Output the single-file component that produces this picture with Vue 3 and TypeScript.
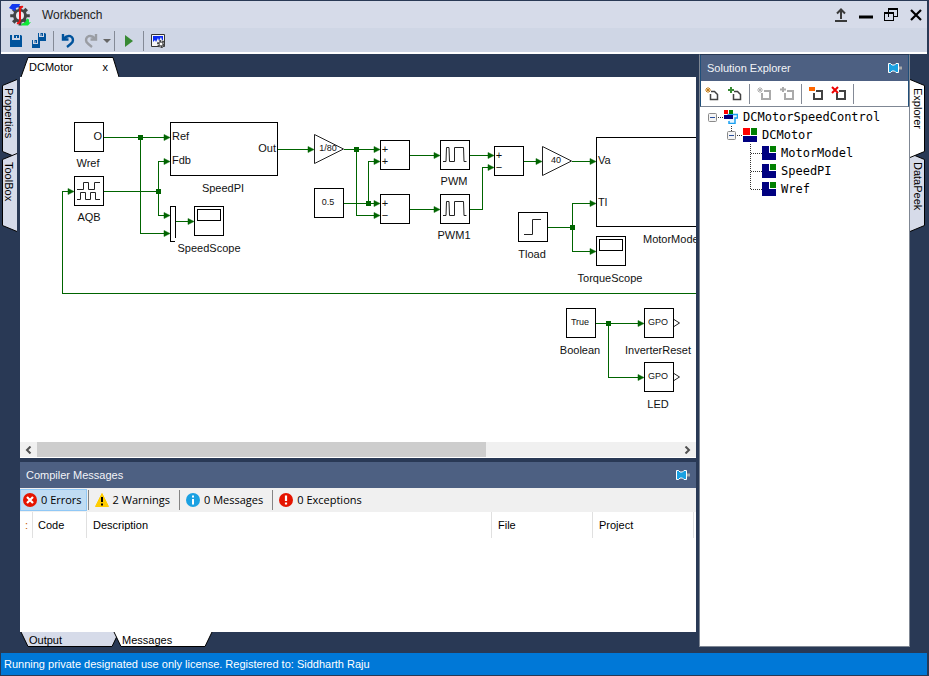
<script setup lang="ts">
import { ref } from 'vue'

type Glyph = 'aqb' | 'scope' | 'pwm' | 'step'
interface Block { x: number; y: number; w?: number; h?: number; glyph?: Glyph; port?: boolean }
interface Label { x: number; y: number; t: string; a?: 'start' | 'middle' | 'end'; small?: boolean }
interface TreeNode { name: string; level: number; kind: 'solution' | 'project' | 'module'; last?: boolean }

const blocks: Block[] = [
  { x: 74, y: 122 },
  { x: 74, y: 176, glyph: 'aqb' },
  { x: 170, y: 122, w: 107, h: 53 },
  { x: 194, y: 206, glyph: 'scope' },
  { x: 314, y: 188 },
  { x: 380, y: 140 },
  { x: 380, y: 194 },
  { x: 440, y: 140, glyph: 'pwm' },
  { x: 440, y: 194, glyph: 'pwm' },
  { x: 494, y: 146 },
  { x: 518, y: 212, glyph: 'step' },
  { x: 596, y: 137, w: 149, h: 89 },
  { x: 596, y: 236, glyph: 'scope' },
  { x: 566, y: 308 },
  { x: 644, y: 308, port: true },
  { x: 644, y: 362, port: true },
]

const gains = [
  { x: 314, y: 134 },
  { x: 542, y: 146 },
]

const glyphs: Record<Glyph, string> = {
  aqb: 'M3 13.500H9.500V6.500H14.500V13.500H20.500V6.500H26M3 23.500H6.500V16.500H11.500V23.500H16.500V16.500H21.500V23.500H26',
  scope: 'M3.500 3.500H26.500V14.500H3.500Z',
  pwm: 'M3 21.500H6L6.500 7.500H9L9.500 21.500H14.500V7.500H23.500L24 21.500H26.500',
  step: 'M6 22.500H14.500V7.500H23',
}

const wires = [
  'M104 137.500H166', 'M140.500 137.500V233.500H166',
  'M104 191.500H158.500', 'M166 161.500H158.500V215.500H166',
  'M176 221.500H190', 'M70 191.500H62.500V293.500H760',
  'M278 149.500H310', 'M344 149.500H376', 'M356.500 149.500V215.500H376',
  'M344 203.500H376', 'M368.500 203.500V161.500H376',
  'M410 155.500H436', 'M410 209.500H436', 'M470 155.500H490',
  'M470 209.500H482.500V167.500H490', 'M524 161.500H538', 'M572 161.500H592',
  'M548 227.500H572.500', 'M592 203.500H572.500V251.500H592',
  'M596 323.500H640', 'M608.500 323.500V377.500H640',
]

const arrows: [number, number][] = [
  [170, 137], [170, 233], [170, 161], [170, 215], [194, 221], [74, 191], [314, 149],
  [380, 149], [380, 215], [380, 203], [380, 161], [440, 155], [440, 209], [494, 155],
  [494, 167], [542, 161], [596, 161], [596, 203], [596, 251], [644, 323], [644, 377],
]

const joints: [number, number][] = [
  [140, 137], [158, 191], [356, 149], [368, 203], [572, 227], [608, 323],
]

const labels: Label[] = [
  { x: 102, y: 140, t: 'O', a: 'end' },
  { x: 88, y: 167, t: 'Wref' },
  { x: 89, y: 221, t: 'AQB' },
  { x: 172, y: 140, t: 'Ref', a: 'start' },
  { x: 172, y: 164, t: 'Fdb', a: 'start' },
  { x: 276, y: 152, t: 'Out', a: 'end' },
  { x: 223, y: 192, t: 'SpeedPI' },
  { x: 209, y: 252, t: 'SpeedScope' },
  { x: 328, y: 151, t: '1/80', small: true },
  { x: 328, y: 205, t: '0.5', small: true },
  { x: 385, y: 153, t: '+' },
  { x: 385, y: 165, t: '+' },
  { x: 385, y: 207, t: '+' },
  { x: 385, y: 219, t: '−' },
  { x: 454, y: 185, t: 'PWM' },
  { x: 454, y: 239, t: 'PWM1' },
  { x: 499, y: 159, t: '+' },
  { x: 499, y: 171, t: '−' },
  { x: 556, y: 163, t: '40', small: true },
  { x: 598, y: 164, t: 'Va', a: 'start' },
  { x: 598, y: 206, t: 'Tl', a: 'start' },
  { x: 532, y: 258, t: 'Tload' },
  { x: 643, y: 243, t: 'MotorModel', a: 'start' },
  { x: 610, y: 282, t: 'TorqueScope' },
  { x: 580, y: 325, t: 'True', small: true },
  { x: 658, y: 325, t: 'GPO', small: true },
  { x: 658, y: 379, t: 'GPO', small: true },
  { x: 580, y: 354, t: 'Boolean' },
  { x: 658, y: 354, t: 'InverterReset' },
  { x: 658, y: 408, t: 'LED' },
]

const tree: TreeNode[] = [
  { name: 'DCMotorSpeedControl', level: 0, kind: 'solution' },
  { name: 'DCMotor', level: 1, kind: 'project' },
  { name: 'MotorModel', level: 2, kind: 'module' },
  { name: 'SpeedPI', level: 2, kind: 'module' },
  { name: 'Wref', level: 2, kind: 'module', last: true },
]

const filters = [
  { id: 'errors', text: '0 Errors' },
  { id: 'warnings', text: '2 Warnings' },
  { id: 'messages', text: '0 Messages' },
  { id: 'exceptions', text: '0 Exceptions' },
]
const activeFilter = ref('errors')
const bottomTab = ref('Messages')
const sideTab = ref('Explorer')
</script>

<template>
  <div class="window">
    <header class="titlebar">
      <svg class="logo" width="22" height="22" viewBox="0 0 22 22">
        <path d="M9.500 2h3v3l2 .8 2-2 2.500 2.500-2 2 .8 2h3v3h-3l-.8 2 2 2-2.500 2.500-2-2-2 .8v3h-3v-3l-2-.8-2 2-2.500-2.500 2-2-.8-2h-3v-3h3l.8-2-2-2 2.500-2.500 2 2 2-.8z" fill="#444" />
        <circle cx="11" cy="11.500" r="4" fill="#e8e8ee" />
        <path d="M14 3q-3-1-3 4v8q0 5-3 4" fill="none" stroke="#f01010" stroke-width="2" />
        <path d="M0 4 3 0h8l-1 3-3 1-1 3z" fill="#1238f0" />
        <path d="M22 18 19 21.500h-7l1-2 3-1 2-4 2 1v3z" fill="#10e838" />
      </svg>
      <h1>Workbench</h1>
      <div class="controls">
        <button aria-label="Pop out"><svg width="14" height="14"><path d="M1 13H13M7 11V2M3 5.500 7 1.500 11 5.500" fill="none" stroke="#3a3a3a" stroke-width="2" /></svg></button>
        <button aria-label="Minimize"><svg width="14" height="14"><path d="M0 9H14" stroke="#000" stroke-width="3" /></svg></button>
        <button aria-label="Restore"><svg width="14" height="14"><path d="M4.500 5V1.500H13.500V8.500H9.500M.500 5.500H9.500V12.500H.500ZM4 .500H14M4.500 9V1M0 4.500H10" fill="none" stroke="#000" shape-rendering="crispEdges" /></svg></button>
        <button aria-label="Close"><svg width="14" height="14"><path d="M2 2 12 12M12 2 2 12" stroke="#000" stroke-width="2.200" /></svg></button>
      </div>
    </header>

    <nav class="toolbar main-tools" aria-label="Main">
      <button aria-label="Save"><svg width="14" height="14"><path d="M1 1H3V6H11V1H12L13 2V13H1ZM5 1H10V4H8V2H7V4H5Z" fill="#00539c" /></svg></button>
      <button aria-label="Save all"><svg width="16" height="16"><path d="M7 0H8V4H13V0H14L15 1V8H7ZM9.500 0H12V3H11V1H10.500V3H9.500ZM1 7H2V11H7V7H8L9 8V15H1ZM3.500 7H6V10H5V8H4.500V10H3.500Z" fill="#00539c" /></svg></button>
      <i class="sep"></i>
      <button aria-label="Undo"><svg width="16" height="16"><path d="M3 1V6.500H8.500M3.500 6Q7 2 10.500 3.200Q14 5 12.500 9Q11 11 7 14" fill="none" stroke="#00539c" stroke-width="2.400" /></svg></button>
      <button aria-label="Redo"><svg width="16" height="16"><path d="M13 1V6.500H7.500M12.500 6Q9 2 5.500 3.200Q2 5 3.500 9Q5 11 9 14" fill="none" stroke="#9a9da3" stroke-width="2.400" /></svg></button>
      <button class="caret" aria-label="Redo list"><svg width="8" height="4"><path d="M0 0H8L4 4Z" fill="#666" /></svg></button>
      <i class="sep"></i>
      <button aria-label="Run"><svg width="8" height="12"><path d="M0 0 8 6 0 12Z" fill="#388a34" /></svg></button>
      <i class="sep"></i>
      <button aria-label="Scope settings">
        <svg width="16" height="16">
          <path d="M1.500 1.500H14.500V13.500H1.500Z" fill="#f5f5f5" stroke="#333" />
          <path d="M3 3H13V11H3Z" fill="#0c2cf0" />
          <path d="M3 11V9L5 7 6 9 8 5 9 8 11 4 12 7H13V11Z" fill="#f5f5f5" />
          <circle cx="11" cy="11" r="3" fill="#fff" stroke="#444" stroke-width="2" stroke-dasharray="2 1" />
          <circle cx="11" cy="11" r="2" fill="#fff" stroke="#444" />
        </svg>
      </button>
    </nav>

    <div class="workspace">
      <nav class="rail left" aria-label="Tool windows">
        <button v-for="t in ['Properties', 'ToolBox']" :key="t">
          <svg class="shape" width="16" height="79"><path d="M16 .500 1.500 6.500V72.500L16 78.500" fill="#d6dbe9" stroke="#000" /></svg>
          <span>{{ t }}</span>
        </button>
      </nav>

      <main class="center">
        <div class="doc-tabs">
          <button class="doc-tab">
            <svg class="shape" width="98" height="20"><path d="M0 20 7 .500H92L98 20" fill="#fff" stroke="#000" /></svg>
            <span>DCMotor</span><span class="x">x</span>
          </button>
        </div>

        <section class="canvas" aria-label="DCMotor diagram">
          <svg class="diagram">
            <g transform="translate(-20 -77)">
              <g class="wires">
                <path v-for="d in wires" :key="d" :d="d" />
              </g>
              <path v-for="([x, y], i) in arrows" :key="'a' + i" class="green" :d="`M${x} ${y + 0.5}l-6 -3v6z`" />
              <rect v-for="([x, y], i) in joints" :key="'j' + i" class="green" :x="x - 2" :y="y - 2" width="5" height="5" />
              <g v-for="(b, i) in blocks" :key="'b' + i" :transform="`translate(${b.x} ${b.y})`">
                <rect class="block" x="0.5" y="0.5" :width="b.w ?? 29" :height="b.h ?? 29" />
                <path v-if="b.glyph" class="glyph" :class="b.glyph" :d="glyphs[b.glyph]" />
                <path v-if="b.port" class="glyph" d="M30 11.500 35.500 15 30 18.500" />
              </g>
              <path class="block" d="M175.500 238V206.500H170.500V241.500H175" />
              <path v-for="g in gains" :key="g.x" class="gain" :d="`M${g.x + 0.5} ${g.y + 0.5}v29l29 -14.5z`" />
              <text v-for="(l, i) in labels" :key="'l' + i" :x="l.x" :y="l.y" :text-anchor="l.a ?? 'middle'" :class="{ small: l.small }">{{ l.t }}</text>
            </g>
          </svg>
        </section>

        <div class="scrollbar">
          <button aria-label="Scroll left"><svg width="7" height="8"><path d="M5.500 .500 2 4 5.500 7.500" fill="none" stroke="#505050" stroke-width="2" /></svg></button>
          <div class="track"><div class="thumb"></div></div>
          <button aria-label="Scroll right"><svg width="7" height="8"><path d="M1.500 .500 5 4 1.500 7.500" fill="none" stroke="#505050" stroke-width="2" /></svg></button>
        </div>

        <section class="messages">
          <div class="panel-title">
            <h2>Compiler Messages</h2>
            <button aria-label="Pin messages"><svg width="14" height="10"><path d="M10 5H14" stroke="#aaa" stroke-width="3" /><path d="M.500 .500H2.500L4 2H6.500L8 .500H10.500V9.500H8L6.500 8H4L2.500 9.500H.500Z" fill="#1ba1e2" stroke="#fff" /></svg></button>
          </div>
          <div class="filters">
            <template v-for="f in filters" :key="f.id">
              <button :class="{ on: activeFilter === f.id }" @click="activeFilter = f.id">
                <svg width="14" height="14">
                  <template v-if="f.id === 'errors'"><circle cx="7" cy="7" r="7" fill="#e51400" /><path d="M4 4 10 10M10 4 4 10" stroke="#fff" stroke-width="2.200" /></template>
                  <template v-else-if="f.id === 'warnings'"><path d="M7 .500 13.500 13.500H.500Z" fill="#fc0" stroke="#fc0" /><path d="M7 4V9M7 10.500V12.500" stroke="#000" stroke-width="2" /></template>
                  <template v-else-if="f.id === 'messages'"><circle cx="7" cy="7" r="7" fill="#1ba1e2" /><path d="M7 2.500V4.500M7 6V11.500" stroke="#fff" stroke-width="2" /></template>
                  <template v-else><circle cx="7" cy="7" r="7" fill="#e51400" /><path d="M7 2.500V8M7 9.500V11.500" stroke="#fff" stroke-width="2.200" /></template>
                </svg>
                {{ f.text }}
              </button>
              <i v-if="f.id !== 'exceptions'" class="sep"></i>
            </template>
          </div>
          <table>
            <thead>
              <tr><th class="c-kind">:</th><th class="c-code">Code</th><th>Description</th><th class="c-file">File</th><th class="c-file">Project</th></tr>
            </thead>
          </table>
        </section>

        <div class="bottom-tabs">
          <button v-for="t in ['Output', 'Messages']" :key="t" :class="{ on: bottomTab === t }" @click="bottomTab = t">
            <svg class="shape" width="100" height="15"><path d="M1 0 8 14.500H92L99 0" /></svg>
            <span>{{ t }}</span>
          </button>
        </div>
      </main>

      <aside class="explorer">
        <div class="panel-title">
          <h2>Solution Explorer</h2>
          <button aria-label="Pin explorer"><svg width="14" height="10"><path d="M10 5H14" stroke="#aaa" stroke-width="3" /><path d="M.500 .500H2.500L4 2H6.500L8 .500H10.500V9.500H8L6.500 8H4L2.500 9.500H.500Z" fill="#1ba1e2" stroke="#fff" /></svg></button>
        </div>
        <nav class="toolbar tree-tools" aria-label="Solution">
          <button aria-label="New project"><svg width="16" height="16"><path d="M7 5.500H10.500L13.500 8.500V13.500H6.500V8" fill="none" stroke="#424242" stroke-width="1.500" /><path d="M4 1V7M1 4H7M2 2 6 6M6 2 2 6" stroke="#c27d1a" /></svg></button>
          <button aria-label="Add project"><svg width="16" height="16"><path d="M7 5.500H10.500L13.500 8.500V13.500H6.500V8" fill="none" stroke="#424242" stroke-width="1.500" /><path d="M4 1V7M1 4H7" stroke="#388a34" stroke-width="2" /></svg></button>
          <i class="sep"></i>
          <button aria-label="New module" disabled><svg width="16" height="16"><path d="M8 5H14V13H6V7" fill="none" stroke="#aaa" stroke-width="2" /><path d="M4 1V7M1 4H7M2 2 6 6M6 2 2 6" stroke="#b0b0b0" /></svg></button>
          <button aria-label="Add module" disabled><svg width="16" height="16"><path d="M8 5H14V13H6V7" fill="none" stroke="#aaa" stroke-width="2" /><path d="M4 1V6M1 3.500H7" stroke="#aaa" stroke-width="2" /></svg></button>
          <i class="sep"></i>
          <button aria-label="Remove"><svg width="16" height="16"><path d="M8 5H14V13H6V7" fill="none" stroke="#424242" stroke-width="2" /><path d="M1 1H7V5H1Z" fill="#f60" /></svg></button>
          <button aria-label="Delete"><svg width="16" height="16"><path d="M8 5H14V13H6V7" fill="none" stroke="#424242" stroke-width="2" /><path d="M1 1 7 7M7 1 1 7" stroke="#e00" stroke-width="2" /></svg></button>
          <i class="sep"></i>
        </nav>
        <ul class="tree" role="tree">
          <li v-for="n in tree" :key="n.name" :class="'level-' + n.level" role="treeitem">
            <svg class="lead" width="16" height="18">
              <g class="dots">
                <path v-if="n.level < 2" d="M10 9.500H16" />
                <path v-if="n.level === 1" d="M4.500 0V5" />
                <path v-if="n.level === 2" :d="n.last ? 'M4.500 0V9.500H16' : 'M4.500 0V18M4.500 9.500H16'" />
              </g>
              <g v-if="n.level < 2" fill="#f4f4f4"><rect x="0.5" y="5.5" width="8" height="8" rx="1" stroke="#8a8a8a" /><path d="M2 9.500H7" stroke="#2a4f9c" /></g>
            </svg>
            <svg v-if="n.kind === 'solution'" width="14" height="14">
              <path d="M3.500 4.500H13.500V8H11V13.500H5V11" fill="#e6f5ff" stroke="#1ba1f2" stroke-width="1.500" />
              <path d="M0 0H4V4H0Z" fill="#f00" /><path d="M5 0H9V4H5Z" fill="#008000" /><path d="M0 5H9V9H0Z" fill="#000080" />
            </svg>
            <svg v-else-if="n.kind === 'project'" width="14" height="14"><path d="M0 0H7V7H0Z" fill="#f00" /><path d="M8 0H14V7H8Z" fill="#008000" /><path d="M0 8H14V14H0Z" fill="#000080" /></svg>
            <svg v-else width="14" height="14"><path d="M0 0H7V7H14V14H0Z" fill="#000080" /><path d="M8 0H14V6H8Z" fill="#008000" /></svg>
            <span>{{ n.name }}</span>
          </li>
        </ul>
      </aside>

      <nav class="rail right" aria-label="Explorers">
        <button v-for="t in ['Explorer', 'DataPeek']" :key="t" :class="{ on: sideTab === t }" @click="sideTab = t">
          <svg class="shape" width="16" height="79"><path d="M0 .500 14.500 6.500V72.500L0 78.500" stroke="#000" /></svg>
          <span>{{ t }}</span>
        </button>
      </nav>
    </div>

    <footer>Running private designated use only license. Registered to: Siddharth Raju</footer>
  </div>
</template>

<style>
body { margin: 0; }
</style>

<style scoped>
* { box-sizing: border-box; }
.window {
  display: flex; flex-direction: column; min-height: 100vh; padding: 1px 2px 1px 1px;
  background: #293955; color: #000; font: 11px/14px "Liberation Sans", Arial, sans-serif;
}
button { padding: 0; border: 0; background: none; font: inherit; color: inherit; }
h1, h2 { margin: 0; font-weight: 400; }
svg { display: block; flex: none; }

.titlebar { display: flex; align-items: center; height: 27px; padding: 0 4px 0 8px; background: #d6dbe9; }
h1 { margin-left: 11px; font-size: 12px; color: #1e1e1e; }
.controls { display: flex; gap: 11px; margin-left: auto; }
.controls button { width: 14px; height: 14px; }

.toolbar { display: flex; align-items: center; gap: 1px; }
.toolbar button { display: flex; align-items: center; justify-content: center; width: 22px; height: 22px; }
.toolbar .caret { width: 8px; }
.toolbar .sep { width: 1px; height: 20px; margin: 0 2px; background: #848a96; }
.main-tools { height: 26px; padding: 2px 0 0 4px; background: #cfd6e5; border-bottom: 2px solid #fff; }

.workspace { flex: 1; display: grid; grid-template-columns: 19px minmax(0, 1fr) 211px 17px; padding-bottom: 6px; }
.rail { display: flex; flex-direction: column; padding-top: 25px; }
.rail button { position: relative; width: 16px; height: 79px; margin-bottom: -5px; }
.rail span { position: absolute; top: 9px; left: 1px; writing-mode: vertical-rl; }
.rail.right path { fill: #d6dbe9; }
.rail.right .on path { fill: #fff; }
.rail.right .on { z-index: 1; }
.shape { position: absolute; inset: 0; }

.center { display: flex; flex-direction: column; margin-right: 3px; }
.doc-tabs { height: 23px; padding: 3px 0 0 1px; }
.doc-tab { position: relative; display: flex; justify-content: space-between; align-items: center; width: 98px; height: 20px; padding: 0 11px 0 8px; }
.doc-tab span { position: relative; }
.canvas { flex: 1; display: flex; background: #fff; }
.diagram { flex: 1; overflow: hidden; min-width: 0; min-height: 345px; }
.wires path { fill: none; stroke: #006400; shape-rendering: crispEdges; }
.green { fill: #006400; stroke: none; }
path.green { stroke: #006400; stroke-width: 0.5; }
.block { fill: #fff; stroke: #000; shape-rendering: crispEdges; }
.glyph { fill: none; stroke: #222; }
.glyph.scope { stroke: #000; shape-rendering: crispEdges; }
.gain { fill: none; stroke: #222; }
.diagram text { font-size: 11px; fill: #111; }
.diagram .small { font-size: 9px; }

.scrollbar { display: flex; height: 16px; background: #f0f0f0; border-bottom: 1px solid #fff; }
.scrollbar button { display: flex; align-items: center; justify-content: center; width: 17px; }
.track { flex: 1; }
.thumb { width: 70%; height: 15px; background: #cdcdcd; }

.panel-title { display: flex; align-items: center; justify-content: space-between; height: 26px; padding: 0 6px; background: #4d6082; color: #f2f4f8; }
h2 { font-size: 11px; }
.messages { height: 170px; margin-top: 4px; background: #fff; }
.filters { display: flex; align-items: center; height: 24px; background: #f0f0f0; font-family: "Open Sans", "Segoe UI", sans-serif; }
.filters button { display: flex; align-items: center; gap: 4px; height: 22px; padding: 0 9px 0 6px; }
.filters button.on { padding: 0 4px 0 2px; margin-right: 1px; border: 1px solid #90c8f6; background: #c0dcf3; }
.filters .sep { width: 1px; height: 20px; background: #848484; }
table { width: calc(100% - 2px); border-spacing: 0; table-layout: fixed; }
th { height: 26px; padding: 0 6px; border-right: 1px solid #e0e0e0; font-weight: 400; text-align: left; }
.c-kind { width: 13px; padding: 0 5px; color: #c25a00; }
.c-code { width: 54px; padding-left: 5px; }
.c-file { width: 101px; }

.bottom-tabs { display: flex; height: 15px; }
.bottom-tabs button { position: relative; width: 100px; height: 15px; margin-right: -7px; padding-left: 9px; text-align: left; }
.bottom-tabs span { position: relative; }
.bottom-tabs path { fill: #d6dbe9; stroke: #000; }
.bottom-tabs .on path { fill: #fff; }
.bottom-tabs .on { z-index: 1; }

.explorer { display: flex; flex-direction: column; border: 1px solid #7f8794; border-top-color: #293955; background: #fff; }
.explorer .panel-title { border: solid #1f4e79; border-width: 0 1px; }
.tree-tools { height: 26px; border: solid #1f4e79; border-width: 0 1px; border-bottom: 1px solid #7f8794; }
.tree { margin: 0; padding: 1px 0 0 8px; list-style: none; font: 12px/18px "DejaVu Sans Mono", monospace; }
.tree li { display: flex; align-items: center; height: 18px; }
.tree span { margin-left: 5px; }
.level-1 { padding-left: 19px; }
.level-2 { padding-left: 38px; }
.dots path { fill: none; stroke: #333; stroke-dasharray: 1 1; shape-rendering: crispEdges; }

footer { height: 22px; padding: 0 3px; background: #0078d7; color: #fff; line-height: 23px; }
</style>
